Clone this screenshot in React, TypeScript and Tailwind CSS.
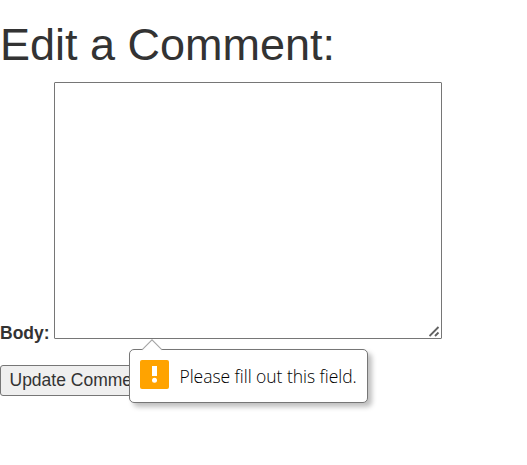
function ValidationBubble() {
  return (
    <div
      role="alert"
      className="absolute left-[129px] top-[-16px] z-10 flex h-[54px] w-[239px] items-center rounded-[5px] border border-[#767676] bg-white pl-[10px] shadow-[4px_4px_5px_rgba(0,0,0,0.25)]"
    >
      <svg className="absolute left-[11px] top-[-11px]" width="22" height="12" viewBox="0 0 22 12">
        <path d="M1 12V11L11 1L21 11V12Z" fill="#fff" />
        <path d="M1 10.8L11 0.8L21 10.8" fill="none" stroke="#a6a6a6" strokeWidth="1.1" />
      </svg>
      <svg className="mt-[-3px] shrink-0" width="29" height="29" viewBox="0 0 29 29">
        <rect width="29" height="29" rx="2" fill="#ffa300" />
        <rect x="12" y="6" width="5" height="10" fill="#fff" />
        <circle cx="14.5" cy="20.3" r="2.5" fill="#fff" />
      </svg>
      <span className="ml-[10.5px] whitespace-nowrap font-['Open_Sans','Noto_Sans',sans-serif] text-[17.5px] font-[350] leading-6 tracking-[-0.04px] text-black">
        Please fill out this field.
      </span>
    </div>
  );
}

export default function App() {
  return (
    <main className="h-[465px] w-full overflow-hidden bg-white font-['Liberation_Sans',Arial,sans-serif] text-[17.5px] leading-[25px] text-[#333]">
      <h1 className="pt-5 text-[45px] font-medium leading-[50px]">Edit a Comment:</h1>
      <form className="mt-3" onSubmit={(event) => event.preventDefault()}>
        <div className="flex items-end">
          <label htmlFor="body" className="mb-[-6px] w-[54px] shrink-0 font-bold">
            Body:
          </label>
          <div className="relative mb-px h-[257px] w-[388px]">
            <textarea
              id="body"
              required
              className="block h-full w-full resize-none rounded-[1px] border border-[#767676] bg-white p-[3px] outline-none"
            />
            <svg
              className="absolute bottom-[2px] right-[2px]"
              width="11"
              height="11"
              viewBox="0 0 11 11"
              stroke="#626262"
              strokeWidth="1.9"
            >
              <path d="M0.5 10L9.5 1M6 10L9.5 6.5" />
            </svg>
          </div>
        </div>
        <div className="relative mt-[25px]">
          <button
            type="submit"
            className="block h-[31px] w-[164px] whitespace-nowrap rounded-[3px] border border-[#767676] bg-[#efefef] pl-[8.5px] text-left leading-[27px]"
          >
            Update Comment
          </button>
          <ValidationBubble />
        </div>
      </form>
    </main>
  );
}
